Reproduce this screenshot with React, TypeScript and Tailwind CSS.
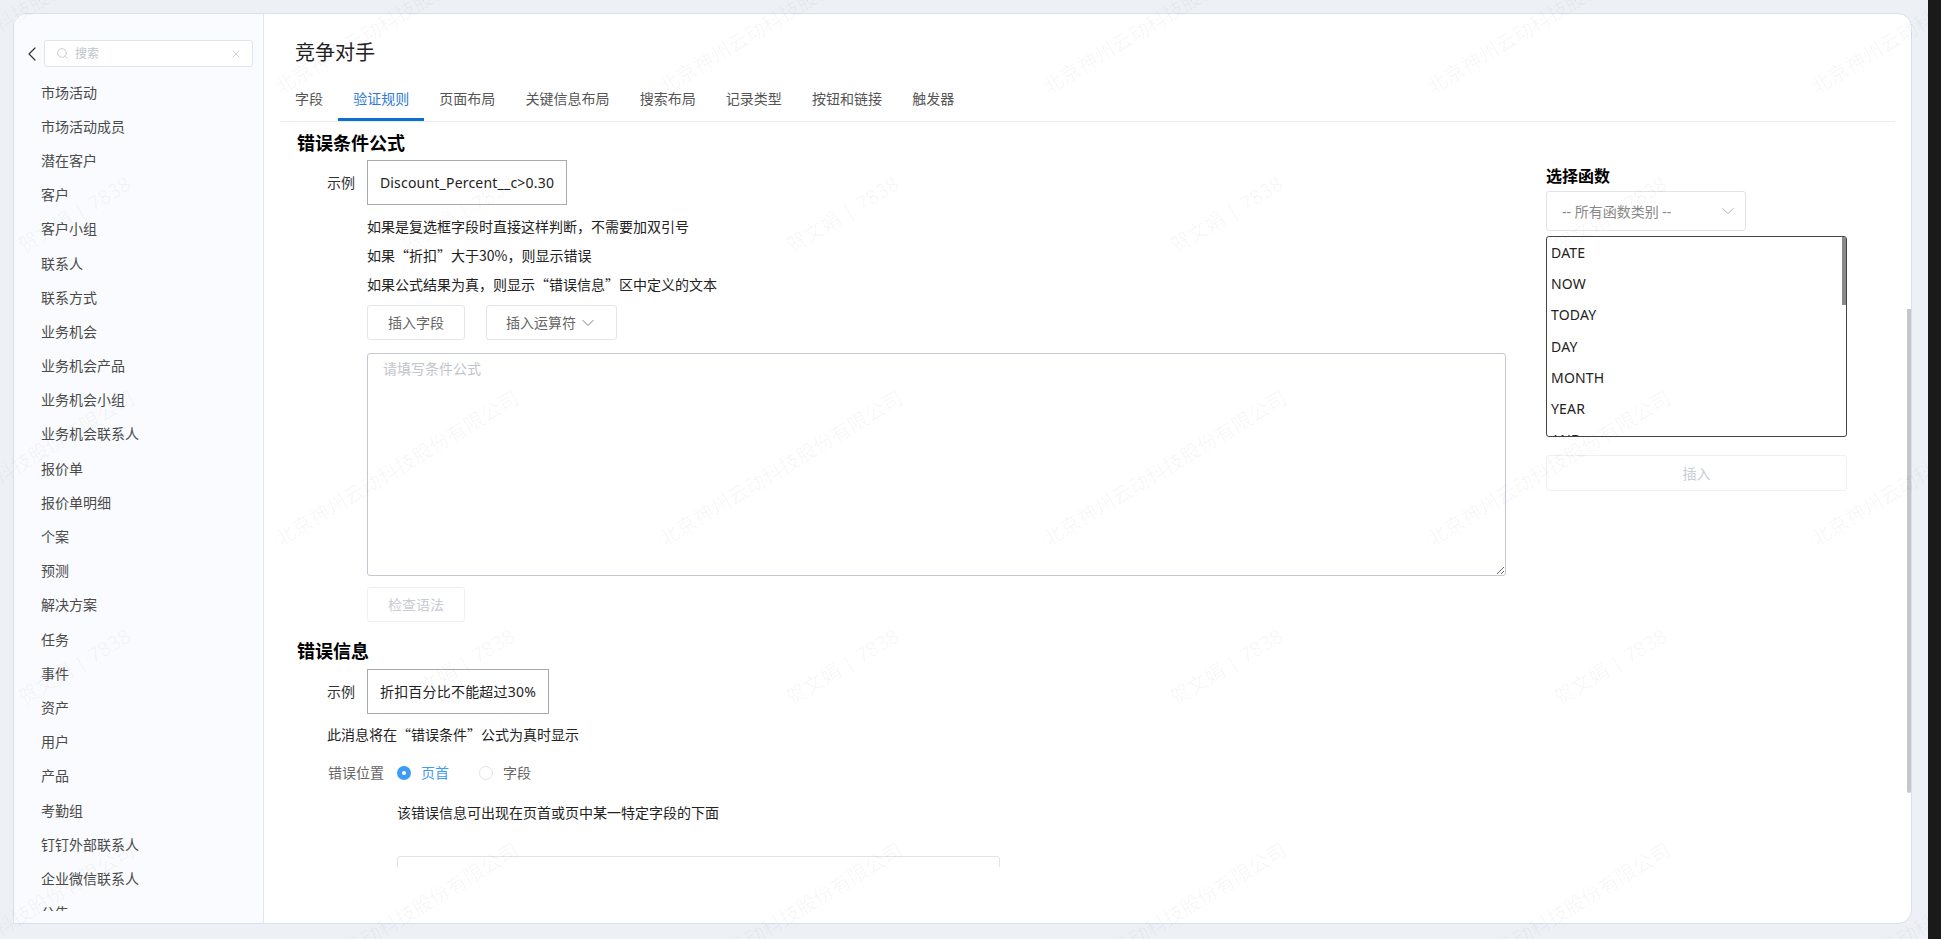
import { ChevronDown, ChevronLeft, Search, X } from 'lucide-react';

const objects = [
  '市场活动', '市场活动成员', '潜在客户', '客户', '客户小组', '联系人', '联系方式', '业务机会', '业务机会产品',
  '业务机会小组', '业务机会联系人', '报价单', '报价单明细', '个案', '预测', '解决方案', '任务', '事件', '资产',
  '用户', '产品', '考勤组', '钉钉外部联系人', '企业微信联系人', '公告',
];

const tabs = ['字段', '验证规则', '页面布局', '关键信息布局', '搜索布局', '记录类型', '按钮和链接', '触发器'];

const functions = ['DATE', 'NOW', 'TODAY', 'DAY', 'MONTH', 'YEAR', 'AND'];

const marks: { text: string; x: number; y: number }[] = [];
for (let row = -1; row < 3; row++) {
  for (let col = -1; col < 5; col++) {
    marks.push({ text: '北京神州云动科技股份有限公司', x: 283 + col * 384, y: 551 + row * 452 });
    marks.push({ text: '贺文娟 | 7838', x: 26 + col * 384, y: 258 + row * 452 });
  }
}

function Heading({ text }: { text: string }) {
  return <h2 className="text-[18px] font-bold leading-[24px] text-black">{text}</h2>;
}

function Example({ text, width }: { text: string; width: string }) {
  return (
    <div className="flex items-center pl-[30px]">
      <span className="w-[40px] text-[14px] text-[#333]">示例</span>
      <div className={`flex h-[45px] items-center justify-center border border-[#aaaaaa] text-[14px] tracking-[0.2px] text-[#222] ${width}`}>
        {text}
      </div>
    </div>
  );
}

export default function App() {
  return (
    <div className="relative flex h-[939px] w-[1941px] overflow-hidden bg-[#edf0f5] font-['Noto_Sans','Noto_Sans_CJK_SC',sans-serif]">
      <div className="ml-[13px] mt-[13px] flex h-[911px] w-[1899px] overflow-hidden rounded-tl-[14px] rounded-tr-[14px] rounded-br-[14px] border border-[#d9e0ee] bg-white">
        {/* sidebar */}
        <aside className="flex h-full w-[250px] shrink-0 flex-col overflow-hidden border-r border-[#e2e7f0] bg-[#f9fbfe]">
          <div className="flex items-center pl-[6px] pt-[26px]">
            <ChevronLeft size={24} strokeWidth={1.2} className="text-[#333]" />
            <div className="flex h-[27px] w-[209px] items-center rounded-[3px] border border-[#dfe4ec] bg-white pl-[11px] pr-[10px]">
              <Search size={13} strokeWidth={1.5} className="text-[#c0c4cc]" />
              <span className="ml-[6px] flex-1 text-[12px] text-[#c0c4cc]">搜索</span>
              <X size={12} strokeWidth={1.5} className="text-[#c0c4cc]" />
            </div>
          </div>
          <ul className="mt-[8px] h-[836px] overflow-hidden pl-[27px]">
            {objects.map((name) => (
              <li key={name} className="flex h-[34.2px] items-center text-[14px] text-[#4a4a4a]">{name}</li>
            ))}
          </ul>
        </aside>

        {/* main */}
        <main className="relative flex min-w-0 flex-1 flex-col">
          <header className="mx-[16px] h-[108px] shrink-0 border-b border-[#e8ebf1]">
            <h1 className="pl-[15px] pt-[24px] text-[20px] leading-[30px] text-[#222]">竞争对手</h1>
            <nav className="mt-[12px] flex">
              {tabs.map((tab) => (
                <div
                  key={tab}
                  className={
                    tab === '验证规则'
                      ? 'flex h-[41px] items-center border-b-[3px] border-[#0b6fcf] px-[15px] pb-[2px] text-[14px] text-[#2f7ad6]'
                      : 'flex h-[41px] items-center px-[15.1px] pb-[5px] text-[14px] text-[#555]'
                  }
                >
                  {tab}
                </div>
              ))}
            </nav>
          </header>

          <div className="flex h-[745px] shrink-0 overflow-hidden pl-[33px]">
            <section className="w-[1209px] shrink-0 pt-[9px]">
              <Heading text="错误条件公式" />
              <div className="mt-[5px]">
                <Example text="Discount_Percent__c>0.30" width="w-[200px]" />
              </div>
              <div className="ml-[70px] mt-[7px] font-['Noto_Sans_CJK_SC',sans-serif] text-[14px] leading-[29px] text-[#222]">
                <p>如果是复选框字段时直接这样判断，不需要加双引号</p>
                <p>如果“折扣”大于30%，则显示错误</p>
                <p>如果公式结果为真，则显示“错误信息”区中定义的文本</p>
              </div>
              <div className="ml-[70px] mt-[6px] flex gap-[21px]">
                <button className="h-[35px] w-[98px] rounded-[3px] border border-[#e2e5ea] text-[14px] text-[#666]">插入字段</button>
                <button className="flex h-[35px] w-[131px] items-center rounded-[3px] border border-[#e2e5ea] pl-[19px] text-[14px] text-[#666]">
                  插入运算符
                  <ChevronDown size={20} strokeWidth={1} className="ml-[2px] text-[#666]" />
                </button>
              </div>
              <textarea
                readOnly
                placeholder="请填写条件公式"
                className="ml-[70px] mt-[13px] block h-[223px] w-[1139px] rounded-[3px] border border-[#c4c7cf] px-[15px] py-[4px] text-[14px] placeholder:text-[#c0c4cc]"
              />
              <button className="ml-[70px] mt-[11px] block h-[35px] w-[98px] rounded-[3px] border border-[#eef0f4] text-[14px] text-[#c8ccd4]">检查语法</button>

              <div className="mt-[17px]">
                <Heading text="错误信息" />
              </div>
              <div className="mt-[6px]">
                <Example text="折扣百分比不能超过30%" width="w-[182px]" />
              </div>
              <p className="ml-[30px] mt-[6px] font-['Noto_Sans_CJK_SC',sans-serif] text-[14px] leading-[29px] text-[#222]">此消息将在“错误条件”公式为真时显示</p>
              <div className="ml-[31px] mt-[9px] flex h-[29px] items-center text-[14px]">
                <span className="w-[69px] text-[#666]">错误位置</span>
                <span className="flex h-[14px] w-[14px] items-center justify-center rounded-full bg-[#3f9cf5]">
                  <span className="h-[4px] w-[4px] rounded-full bg-white" />
                </span>
                <span className="ml-[10px] text-[#3f9cf5]">页首</span>
                <span className="ml-[30px] h-[14px] w-[14px] rounded-full border border-[#dfe3ea]" />
                <span className="ml-[10px] text-[#666]">字段</span>
              </div>
              <p className="ml-[100px] mt-[11px] text-[14px] leading-[29px] text-[#222]">该错误信息可出现在页首或页中某一特定字段的下面</p>
              <div className="ml-[100px] mt-[29px] flex h-[40px] w-[603px] items-center rounded-[3px] border border-[#dfe3ea] pl-[15px] text-[14px] text-[#c0c4cc]">请输入</div>
            </section>

            <section className="ml-[40px] w-[301px] shrink-0 pt-[42px]">
              <h3 className="text-[16px] font-bold leading-[24px] text-black">选择函数</h3>
              <div className="mt-[3px] flex h-[40px] w-[200px] items-center justify-between rounded-[3px] border border-[#dfe3ea] pl-[15px] pr-[6px] text-[14px] text-[#888]">
                <span>-- 所有函数类别 --</span>
                <ChevronDown size={22} strokeWidth={1} className="text-[#b0b5bf]" />
              </div>
              <div className="relative mt-[5px] h-[201px] overflow-hidden rounded-[3px] border border-[#444] pl-[4px] text-[14px] tracking-[0.2px] text-[#222]">
                {functions.map((fn) => (
                  <div key={fn} className="flex h-[31.2px] items-center">{fn}</div>
                ))}
                <div className="absolute right-0 top-0 h-[68px] w-[4px] bg-[#8a8a8a]" />
              </div>
              <button className="mt-[18px] block h-[36px] w-full rounded-[3px] border border-[#eef0f4] text-[14px] text-[#c8ccd4]">插入</button>
            </section>
          </div>

          {/* page scrollbar */}
          <div className="absolute right-0 top-[295px] h-[484px] w-[4px] rounded-b-[2px] bg-[#c6c6c6]" />
        </main>
      </div>

      <div className="ml-[16px] w-[13px] shrink-0 bg-[#1a1a1a]" />

      {/* watermark */}
      <div className="pointer-events-none absolute left-0 top-0 h-[939px] w-[1928px] overflow-hidden">
        {marks.map((m, i) => (
          <span
            key={i}
            className="absolute origin-bottom-left -rotate-[31deg] whitespace-nowrap text-[20px] leading-[24px] text-black/[0.04]"
            style={{ left: m.x, top: m.y - 24 }}
          >
            {m.text}
          </span>
        ))}
      </div>
    </div>
  );
}
